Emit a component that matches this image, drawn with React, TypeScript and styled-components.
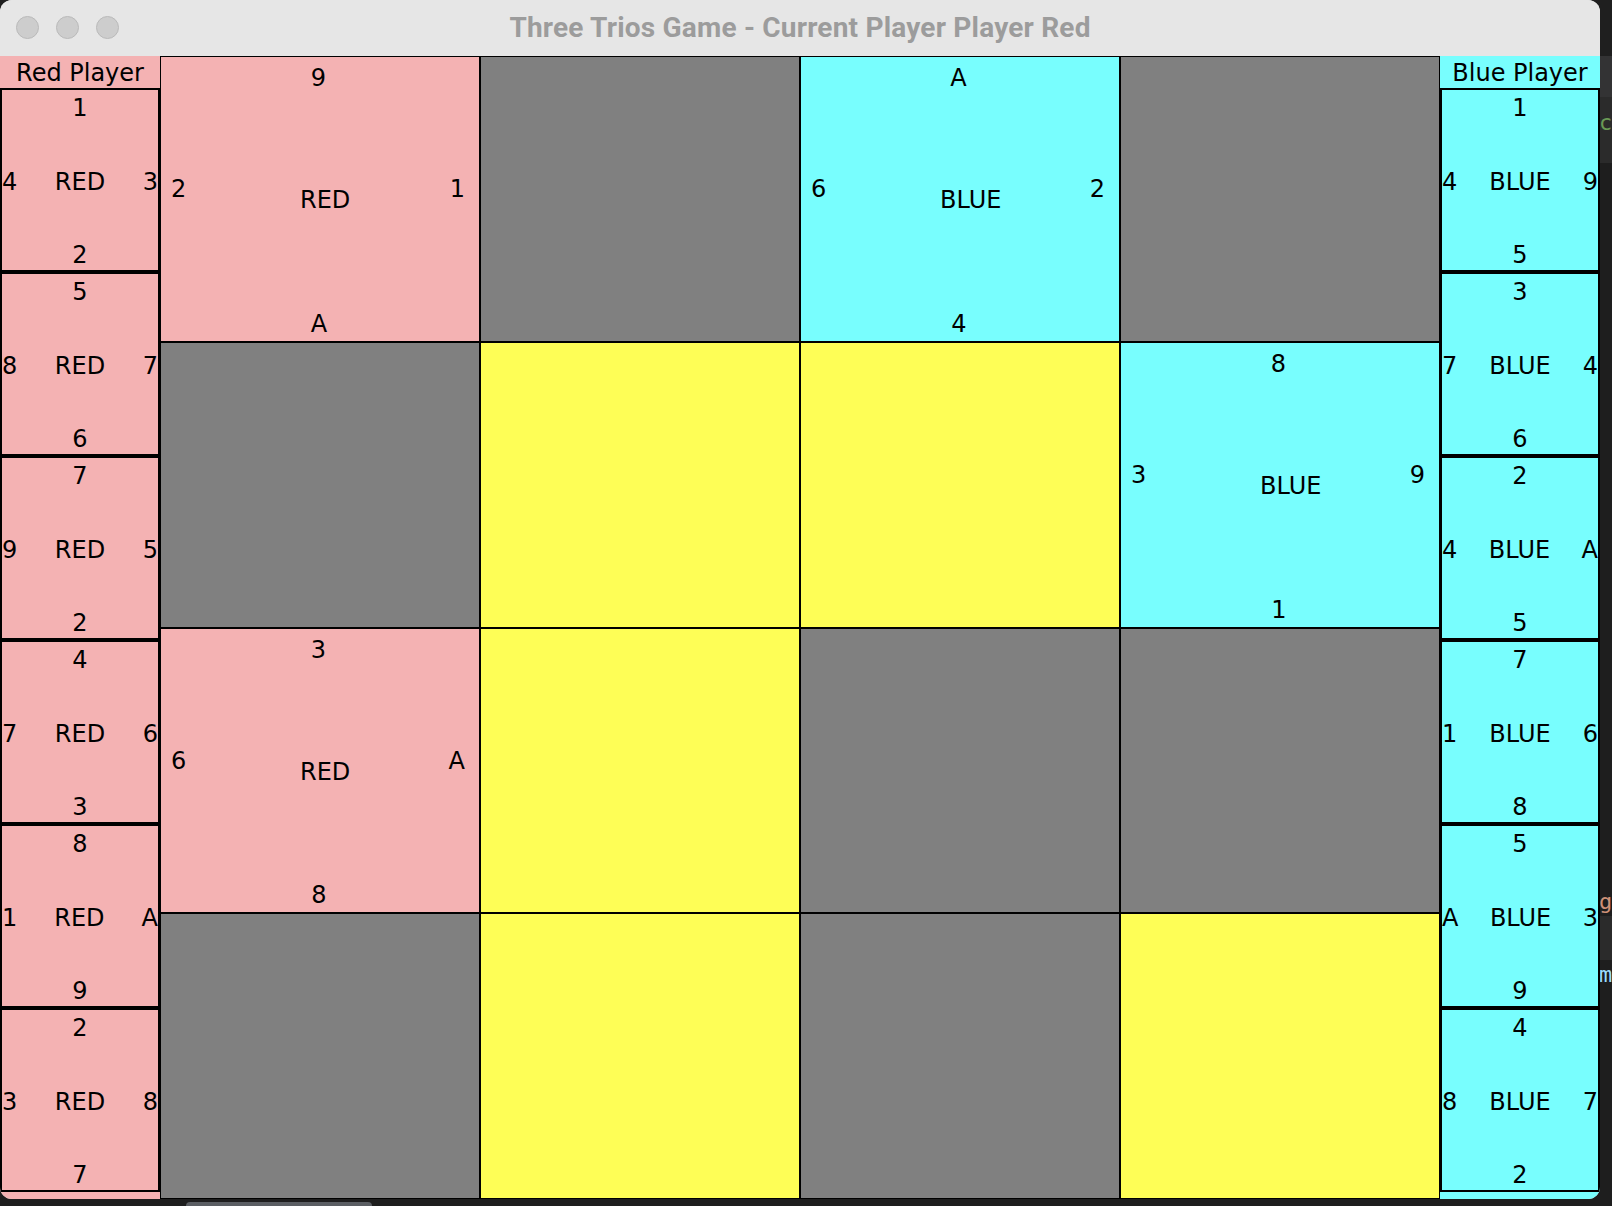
import React from "react";
import styled, { createGlobalStyle } from "styled-components";

const Global = createGlobalStyle`
  html, body { margin: 0; padding: 0; background: #1e1e1e; }
  body {
    width: 1612px; height: 1206px; overflow: hidden;
    font-family: "DejaVu Sans", "Liberation Sans", sans-serif;
    color: #000;
  }
  #root { width: 1612px; height: 1206px; }
`;

type Kind = "red" | "blue" | "gray" | "yellow";
const COLORS: Record<Kind, string> = {
  red: "#f4b2b3",
  blue: "#78fefe",
  gray: "#808080",
  yellow: "#fefe56",
};

interface Card {
  owner: "red" | "blue";
  n: string;
  w: string;
  e: string;
  s: string;
}

const Page = styled.div`
  display: flex;
  flex-direction: column;
  width: 1612px;
  height: 1206px;
`;

const TopRow = styled.div`
  display: flex;
  height: 1199px;
`;

const Window = styled.div`
  width: 1600px;
  height: 1199px;
  flex: none;
  display: flex;
  flex-direction: column;
  border-radius: 12px;
  overflow: hidden;
  background: #e6e6e6;
`;

const TitleBar = styled.div`
  height: 56px;
  flex: none;
  display: grid;
  grid-template-columns: 1fr auto 1fr;
  align-items: center;
  background: #e6e6e6;
`;

const Lights = styled.div`
  display: flex;
  gap: 17px;
  padding-left: 16px;
  margin-top: -1px;
`;

const Light = styled.span`
  width: 23px;
  height: 23px;
  box-sizing: border-box;
  border-radius: 50%;
  background: #cdcdcd;
  border: 1px solid #bababa;
`;

const Title = styled.div`
  font-family: Roboto, "Liberation Sans", sans-serif;
  font-weight: 700;
  font-size: 28px;
  letter-spacing: 0.2px;
  color: #9c9c9c;
  white-space: nowrap;
  margin-top: -2px;
`;

const Content = styled.div`
  flex: 1;
  display: flex;
  min-height: 0;
`;

const HandPanel = styled.div<{ $bg: string }>`
  width: 160px;
  flex: none;
  display: flex;
  flex-direction: column;
  background: ${(p) => p.$bg};
`;

const PanelLabel = styled.div`
  height: 32px;
  box-sizing: border-box;
  padding-top: 3px;
  line-height: 29px;
  flex: none;
  text-align: center;
  font-size: 24px;
  white-space: nowrap;
`;

const HandCard = styled.div`
  height: 184px;
  flex: none;
  box-sizing: border-box;
  border: 2px solid #000;
  display: flex;
  flex-direction: column;
  font-size: 24px;
`;

const CardTop = styled.div`
  line-height: 28px;
  padding-top: 4px;
  text-align: center;
`;

const CardBottom = styled.div`
  line-height: 28px;
  padding-bottom: 1px;
  text-align: center;
`;

const CardMiddle = styled.div`
  flex: 1;
  display: flex;
  align-items: center;
  line-height: 28px;
`;

const SideNum = styled.span`
  flex: none;
`;

const CardName = styled.span`
  flex: 1;
  text-align: center;
`;

const Board = styled.div`
  width: 1280px;
  flex: none;
  display: grid;
  grid-template-columns: repeat(4, 320px);
  grid-template-rows: repeat(4, 1fr);
`;

const BoardCell = styled.div<{ $bg: string }>`
  box-sizing: border-box;
  border: 1px solid #000;
  background: ${(p) => p.$bg};
  display: flex;
  flex-direction: column;
  font-size: 24px;
  min-height: 0;
`;

const BoardTop = styled.div`
  line-height: 28px;
  padding-top: 7px;
  padding-right: 3px;
  text-align: center;
`;

const BoardBottom = styled.div`
  line-height: 28px;
  padding-bottom: 3px;
  padding-right: 2px;
  text-align: center;
`;

const BoardMiddle = styled.div`
  flex: 1;
  display: grid;
  grid-template-columns: 129px 1fr auto;
  align-items: center;
  padding: 0 14px 1px 10px;
  line-height: 28px;
`;

const BoardSide = styled.span`
  padding-bottom: 22px;
`;

const BoardName = styled.span``;

const EditorStrip = styled.div`
  width: 12px;
  flex: none;
  display: flex;
  flex-direction: column;
  overflow: hidden;
  font-family: "DejaVu Sans Mono", "Liberation Mono", monospace;
  font-size: 22px;
  background: #1e1e1e;
`;

const StripBlock = styled.div<{ $h: number; $bg: string; $color?: string }>`
  height: ${(p) => p.$h}px;
  flex: none;
  background: ${(p) => p.$bg};
  color: ${(p) => p.$color || "transparent"};
  line-height: ${(p) => p.$h}px;
  white-space: nowrap;
  margin-left: -1px;
`;

const BottomStrip = styled.div`
  height: 7px;
  flex: none;
  background: #1e1e1e;
  padding-left: 186px;
  display: flex;
  align-items: flex-end;
`;

const ScrollPill = styled.div`
  width: 186px;
  height: 4px;
  background: #5b5e63;
  border-radius: 4px 4px 0 0;
`;

const redHand: Card[] = [
  { owner: "red", n: "1", w: "4", e: "3", s: "2" },
  { owner: "red", n: "5", w: "8", e: "7", s: "6" },
  { owner: "red", n: "7", w: "9", e: "5", s: "2" },
  { owner: "red", n: "4", w: "7", e: "6", s: "3" },
  { owner: "red", n: "8", w: "1", e: "A", s: "9" },
  { owner: "red", n: "2", w: "3", e: "8", s: "7" },
];

const blueHand: Card[] = [
  { owner: "blue", n: "1", w: "4", e: "9", s: "5" },
  { owner: "blue", n: "3", w: "7", e: "4", s: "6" },
  { owner: "blue", n: "2", w: "4", e: "A", s: "5" },
  { owner: "blue", n: "7", w: "1", e: "6", s: "8" },
  { owner: "blue", n: "5", w: "A", e: "3", s: "9" },
  { owner: "blue", n: "4", w: "8", e: "7", s: "2" },
];

type Slot = { kind: "gray" | "yellow" } | { kind: "card"; card: Card };

const g: Slot = { kind: "gray" };
const y: Slot = { kind: "yellow" };
const c = (owner: "red" | "blue", n: string, w: string, e: string, s: string): Slot => ({
  kind: "card",
  card: { owner, n, w, e, s },
});

const board: Slot[][] = [
  [c("red", "9", "2", "1", "A"), g, c("blue", "A", "6", "2", "4"), g],
  [g, y, y, c("blue", "8", "3", "9", "1")],
  [c("red", "3", "6", "A", "8"), y, g, g],
  [g, y, g, y],
];

function HandCardView({ card }: { card: Card }) {
  return (
    <HandCard>
      <CardTop>{card.n}</CardTop>
      <CardMiddle>
        <SideNum>{card.w}</SideNum>
        <CardName>{card.owner === "red" ? "RED" : "BLUE"}</CardName>
        <SideNum>{card.e}</SideNum>
      </CardMiddle>
      <CardBottom>{card.s}</CardBottom>
    </HandCard>
  );
}

function BoardSlot({ slot }: { slot: Slot }) {
  if (slot.kind !== "card") {
    return <BoardCell $bg={COLORS[slot.kind]} />;
  }
  const { card } = slot;
  return (
    <BoardCell $bg={COLORS[card.owner]}>
      <BoardTop>{card.n}</BoardTop>
      <BoardMiddle>
        <BoardSide>{card.w}</BoardSide>
        <BoardName>{card.owner === "red" ? "RED" : "BLUE"}</BoardName>
        <BoardSide>{card.e}</BoardSide>
      </BoardMiddle>
      <BoardBottom>{card.s}</BoardBottom>
    </BoardCell>
  );
}

export default function App() {
  return (
    <>
      <Global />
      <Page>
        <TopRow>
          <Window>
            <TitleBar>
              <Lights>
                <Light />
                <Light />
                <Light />
              </Lights>
              <Title>Three Trios Game - Current Player Player Red</Title>
              <div />
            </TitleBar>
            <Content>
              <HandPanel $bg={COLORS.red}>
                <PanelLabel>Red Player</PanelLabel>
                {redHand.map((card, i) => (
                  <HandCardView key={i} card={card} />
                ))}
              </HandPanel>
              <Board>
                {board.flat().map((slot, i) => (
                  <BoardSlot key={i} slot={slot} />
                ))}
              </Board>
              <HandPanel $bg={COLORS.blue}>
                <PanelLabel>Blue Player</PanelLabel>
                {blueHand.map((card, i) => (
                  <HandCardView key={i} card={card} />
                ))}
              </HandPanel>
            </Content>
          </Window>
          <EditorStrip>
            <StripBlock $h={56} $bg="#1f1f1f" />
            <StripBlock $h={41} $bg="#333334" />
            <StripBlock $h={52} $bg="#2b2b2b" $color="#6a9955">co</StripBlock>
            <StripBlock $h={14} $bg="#2b2b2b" />
            <StripBlock $h={725} $bg="#1e1e1e" />
            <StripBlock $h={28} $bg="#1e1e1e" $color="#ce9178">g</StripBlock>
            <StripBlock $h={44} $bg="#2b2b2b" />
            <StripBlock $h={30} $bg="#1e1e1e" $color="#9cdcfe">m</StripBlock>
            <StripBlock $h={209} $bg="#1e1e1e" />
          </EditorStrip>
        </TopRow>
        <BottomStrip>
          <ScrollPill />
        </BottomStrip>
      </Page>
    </>
  );
}
